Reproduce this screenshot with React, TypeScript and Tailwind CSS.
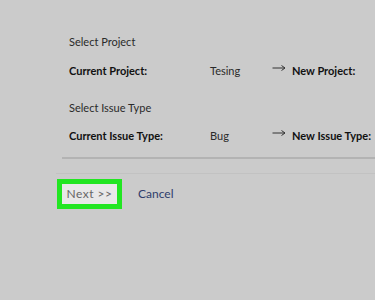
function Arrow() {
  return (
    <svg width="14" height="8" viewBox="0 0 14 8" className="shrink-0 -mt-[6px]">
      <path d="M0.5 4H13M9.5 1.5L13 4L9.5 6.5" fill="none" stroke="#333" strokeWidth="1" />
    </svg>
  );
}

export default function App() {
  return (
    <div className="w-[375px] h-[300px] bg-[#cbcbcb] overflow-hidden text-[11px] text-[#2a2a2a]" style={{ fontFamily: 'Lato, "Open Sans", sans-serif' }}>
      <div className="pt-[34px] pl-[69px]">
        <div className="h-[16px] leading-[16px]">Select Project</div>
        <div className="mt-[13px] h-[16px] leading-[16px] flex items-center whitespace-nowrap">
          <span className="w-[141px] shrink-0 font-bold text-[#111]">Current Project:</span>
          <span className="w-[62px] shrink-0">Tesing</span>
          <span className="w-[20px] shrink-0 flex"><Arrow /></span>
          <span className="font-bold text-[#111]">New Project:</span>
        </div>
        <div className="mt-[21px] h-[16px] leading-[16px]">Select Issue Type</div>
        <div className="mt-[12px] h-[16px] leading-[16px] flex items-center whitespace-nowrap">
          <span className="w-[141px] shrink-0 font-bold text-[#111]">Current Issue Type:</span>
          <span className="w-[62px] shrink-0">Bug</span>
          <span className="w-[20px] shrink-0 flex"><Arrow /></span>
          <span className="font-bold text-[#111]">New Issue Type:</span>
        </div>
      </div>
      <div className="ml-[62px] mt-[13px] h-[2px] bg-[#b3b3b3]" />
      <div className="ml-[56px] mt-[14px] h-px bg-[#c2c2c2]" />
      <div className="ml-[57px] mt-[5px] flex items-center">
        <div className="w-[65px] h-[30px] border-[5px] border-[#22e622] bg-[#e8e8e8] flex items-center justify-center text-[#666] text-[12px] tracking-[0.5px]">
          Next &gt;&gt;
        </div>
        <span className="ml-[16px] text-[#2e3d6b] text-[12px]">Cancel</span>
      </div>
    </div>
  );
}
